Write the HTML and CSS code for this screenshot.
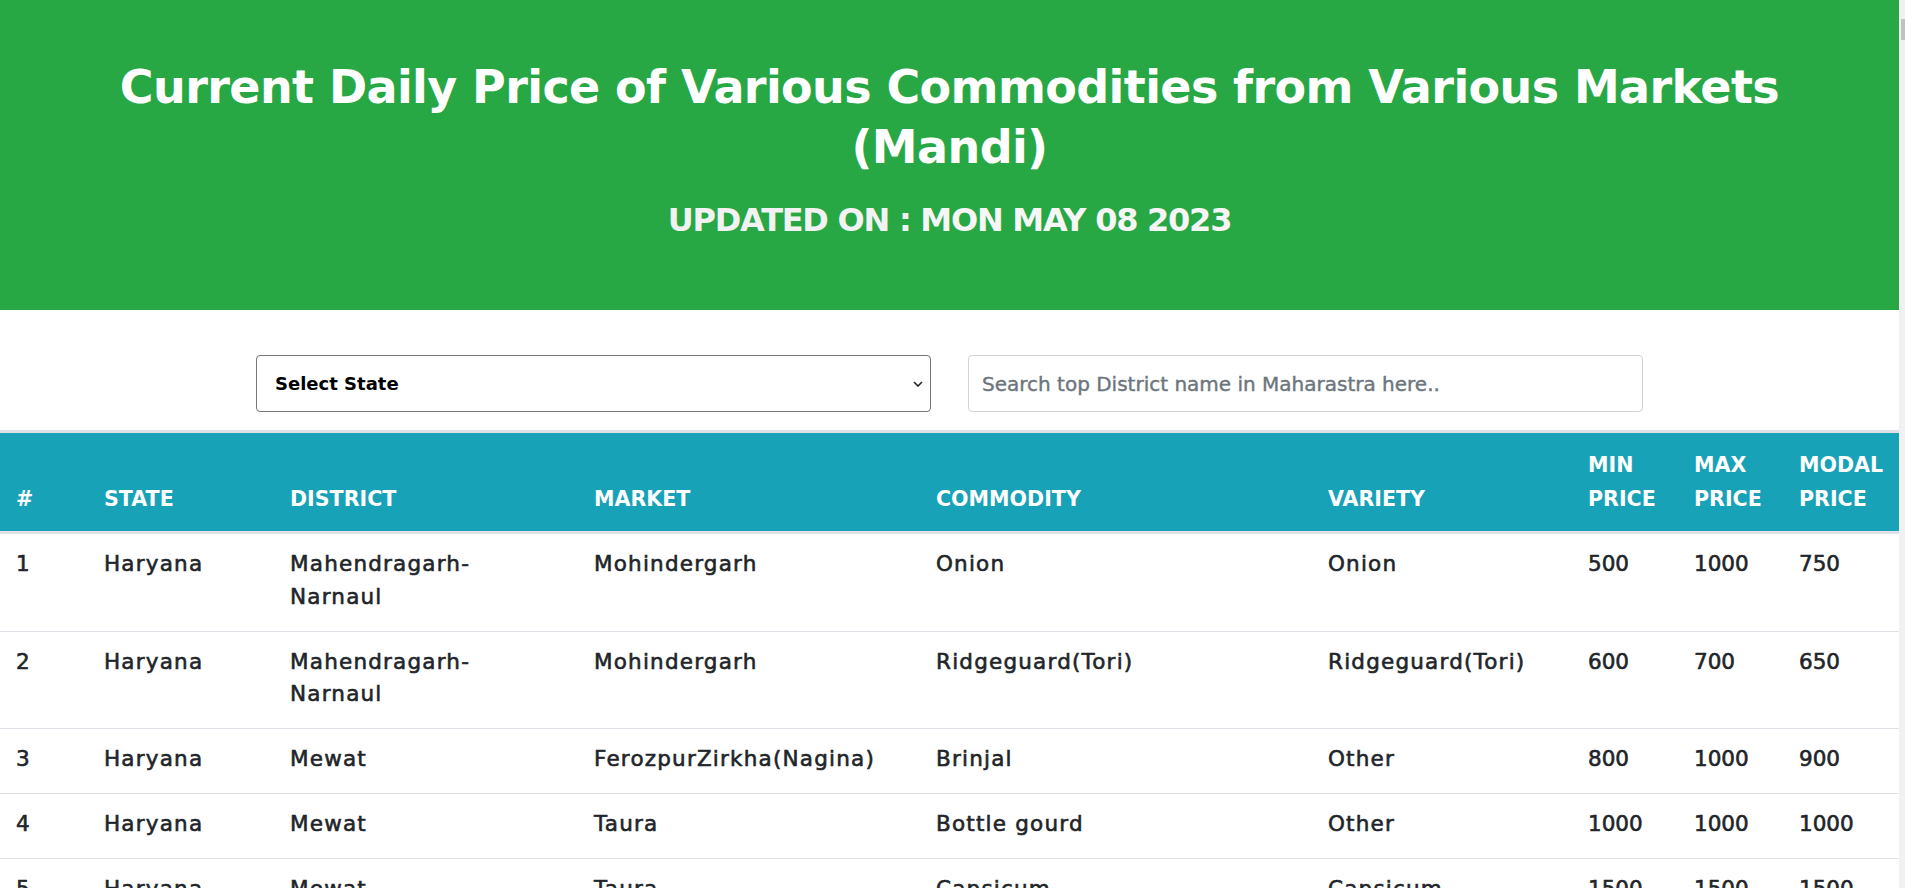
FILE: index.html
```html
<!DOCTYPE html>
<html lang="en">
<head>
<meta charset="utf-8">
<title>Mandi Prices</title>
<link rel="stylesheet" href="styles.css">
</head>
<body>
<div class="page">
  <main class="content">
    <header class="hero">
      <h1 class="hero-title">Current Daily Price of Various Commodities from Various Markets (Mandi)</h1>
      <h3 class="hero-sub">UPDATED ON : <span class="hero-date">MON MAY 08 2023</span></h3>
    </header>
    <section class="filters">
      <div class="select-box">
        <select class="state-select"><option>Select State</option></select>
        <svg class="chevron" width="10" height="6" viewBox="0 0 10 6"><path d="M1 1l4 4 4-4" fill="none" stroke="#222" stroke-width="1.6"/></svg>
      </div>
      <input class="search" type="text" placeholder="Search top District name in Maharastra here..">
    </section>
    <table class="prices">
      <colgroup>
        <col class="c-num"><col class="c-state"><col class="c-district"><col class="c-market"><col class="c-commodity"><col class="c-variety"><col class="c-min"><col class="c-max"><col class="c-modal">
      </colgroup>
      <thead>
        <tr><th>#</th><th>State</th><th>District</th><th>Market</th><th>Commodity</th><th>Variety</th><th>Min<br>Price</th><th>Max<br>Price</th><th>Modal<br>Price</th></tr>
      </thead>
      <tbody>
        <tr><td class="num">1</td><td>Haryana</td><td>Mahendragarh-<br>Narnaul</td><td>Mohindergarh</td><td>Onion</td><td>Onion</td><td class="num">500</td><td class="num">1000</td><td class="num">750</td></tr>
        <tr><td class="num">2</td><td>Haryana</td><td>Mahendragarh-<br>Narnaul</td><td>Mohindergarh</td><td>Ridgeguard(Tori)</td><td>Ridgeguard(Tori)</td><td class="num">600</td><td class="num">700</td><td class="num">650</td></tr>
        <tr><td class="num">3</td><td>Haryana</td><td>Mewat</td><td>FerozpurZirkha(Nagina)</td><td>Brinjal</td><td>Other</td><td class="num">800</td><td class="num">1000</td><td class="num">900</td></tr>
        <tr><td class="num">4</td><td>Haryana</td><td>Mewat</td><td>Taura</td><td>Bottle gourd</td><td>Other</td><td class="num">1000</td><td class="num">1000</td><td class="num">1000</td></tr>
        <tr><td class="num">5</td><td>Haryana</td><td>Mewat</td><td>Taura</td><td>Capsicum</td><td>Capsicum</td><td class="num">1500</td><td class="num">1500</td><td class="num">1500</td></tr>
        <tr><td class="num">6</td><td>Haryana</td><td>Mewat</td><td>Taura</td><td>Cucumbar(Kheera)</td><td>Cucumbar(Kheera)</td><td class="num">1000</td><td class="num">1000</td><td class="num">1000</td></tr>
      </tbody>
    </table>
  </main>
  <aside class="scrollbar"><div class="thumb"></div></aside>
</div>
</body>
</html>
```
FILE: styles.css
```css
html, body {
  margin: 0;
  height: 100%;
  overflow: hidden;
}
body {
  font-family: "DejaVu Sans", "Open Sans", sans-serif;
  color: #212529;
  background: #fff;
}
.page {
  display: flex;
  height: 100vh;
}
.content {
  flex: 1;
  min-width: 0;
}
.scrollbar {
  width: 6px;
  background: #f1f1f1;
  display: flex;
  justify-content: flex-end;
  padding-top: 19px;
  box-sizing: border-box;
}
.thumb {
  width: 4px;
  height: 21px;
  background: #c1c1c1;
}
.hero {
  background: #28a745;
  text-align: center;
  padding: 57px 100px 70px;
}
.hero-title {
  margin: 0;
  color: #fff;
  font-weight: 700;
  font-size: 46px;
  line-height: 60px;
  letter-spacing: -0.6px;
}
.hero-sub {
  margin: 23px 0 0;
  color: #f2f2f2;
  font-weight: 700;
  font-size: 32px;
  line-height: 40px;
  letter-spacing: -1.25px;
}
.hero-date {
  font-weight: 700;
  color: #f6f6f6;
}
.filters {
  display: flex;
  justify-content: center;
  gap: 37px;
  padding: 45px 0 18px;
}
.select-box {
  position: relative;
  width: 675px;
}
.state-select {
  width: 100%;
  height: 57px;
  appearance: none;
  -webkit-appearance: none;
  border: 1px solid #767676;
  border-radius: 4px;
  background: #fff;
  padding: 0 18px;
  font-family: inherit;
  font-weight: 700;
  font-size: 18px;
  color: #000;
}
.chevron {
  position: absolute;
  right: 8px;
  top: 26px;
}
.search {
  width: 675px;
  height: 57px;
  box-sizing: border-box;
  border: 1px solid #ced4da;
  border-radius: 4px;
  padding: 0 13px;
  font-family: inherit;
  font-weight: 400;
  font-size: 20px;
  color: #495057;
  -webkit-text-stroke: 0.4px #6c757d;
}
.search::placeholder {
  color: #6c757d;
}
.prices {
  width: 100%;
  border-collapse: separate;
  border-spacing: 0;
  table-layout: fixed;
}
.c-num { width: 88px; }
.c-state { width: 186px; }
.c-district { width: 304px; }
.c-market { width: 342px; }
.c-commodity { width: 392px; }
.c-variety { width: 260px; }
.c-min { width: 106px; }
.c-max { width: 105px; }
.c-modal { width: 116px; }
.prices th {
  background: #17a2b8;
  color: #fff;
  text-transform: uppercase;
  text-align: left;
  vertical-align: bottom;
  font-weight: 700;
  font-size: 20.6px;
  line-height: 34px;
  padding: 15px 16px;
  border-top: 3px solid #dee2e6;
  border-bottom: 2px solid #dee2e6;
}
.prices td {
  vertical-align: top;
  font-weight: 400;
  font-size: 21.5px;
  line-height: 32.5px;
  letter-spacing: 1.2px;
  padding: 14px 16px 17.5px;
  border-top: 1px solid #dee2e6;
  color: #212529;
  -webkit-text-stroke: 0.6px #212529;
}
.prices td.num {
  letter-spacing: 0;
}
```
